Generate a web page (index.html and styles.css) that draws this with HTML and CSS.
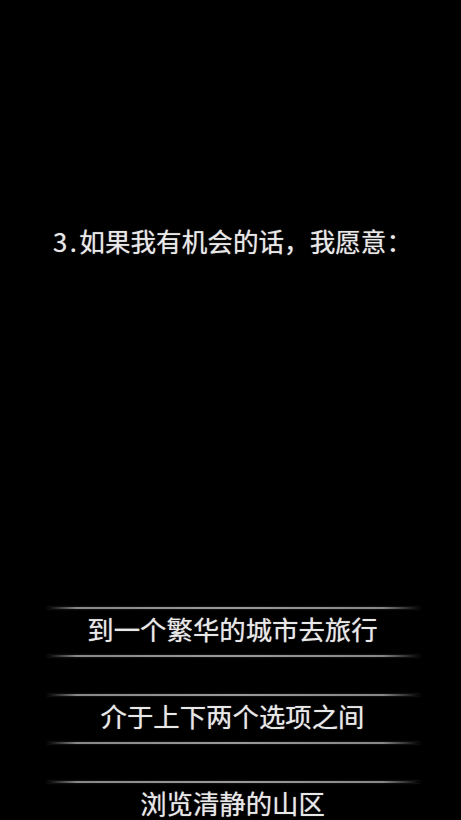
FILE: index.html
```html
<!DOCTYPE html>
<html lang="zh-CN">
<head>
<meta charset="utf-8">
<title>问题</title>
<link rel="stylesheet" href="styles.css">
</head>
<body>
<main class="screen">
  <h1 class="question"><span class="num">3.</span>如果我有机会的话，我愿意：</h1>
  <ul class="options">
    <li class="option"><span class="line"></span><span class="label">到一个繁华的城市去旅行</span><span class="line"></span></li>
    <li class="option"><span class="line"></span><span class="label">介于上下两个选项之间</span><span class="line"></span></li>
    <li class="option"><span class="line"></span><span class="label">浏览清静的山区</span><span class="line"></span></li>
  </ul>
</main>
</body>
</html>
```
FILE: styles.css
```css
html, body {
  margin: 0;
  padding: 0;
  background: #000;
}
body {
  width: 461px;
  height: 820px;
  overflow: hidden;
  font-family: "Noto Sans CJK SC", "Noto Sans", sans-serif;
  color: #e8e8e8;
}
.screen {
  display: flex;
  flex-direction: column;
  height: 820px;
}
.question {
  margin: 226px 0 0 0;
  padding-left: 53px;
  font-size: 25.6px;
  line-height: 30px;
  font-weight: 400;
  text-align: left;
  white-space: nowrap;
  text-shadow: 0 0 1px rgba(255,255,255,0.6);
}
.num {
  letter-spacing: 2.5px;
}
.options {
  list-style: none;
  margin: 351px 0 0 47px;
  padding: 0;
  width: 373px;
  display: flex;
  flex-direction: column;
  gap: 37px;
}
.option {
  display: flex;
  flex-direction: column;
}
.line {
  display: block;
  height: 2px;
  background: linear-gradient(to right, rgba(140,140,140,0) 0%, rgba(150,150,150,0.9) 8%, #9a9a9a 50%, rgba(150,150,150,0.9) 90%, rgba(140,140,140,0) 100%);
  box-shadow: 0 0 2px rgba(160,160,160,0.35);
}
.label {
  display: block;
  height: 40px;
  line-height: 40px;
  padding-bottom: 6px;
  font-size: 26.4px;
  text-align: center;
  padding-right: 2px;
  white-space: nowrap;
  text-shadow: 0 0 1px rgba(255,255,255,0.6);
}
```
